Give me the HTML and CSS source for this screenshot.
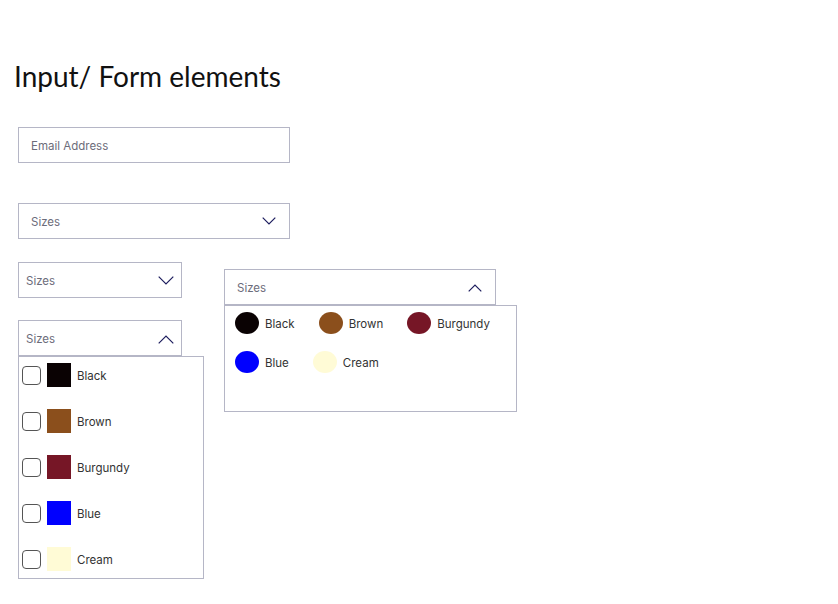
FILE: index.html
```html
<!DOCTYPE html>
<html lang="en">
<head>
<meta charset="utf-8">
<title>Input/ Form elements</title>
<link rel="stylesheet" href="styles.css">
</head>
<body>
<h1 class="title">Input/ Form elements</h1>
<div class="form">
  <div class="field field-wide"><span class="placeholder">Email Address</span></div>

  <div class="select select-wide">
    <span class="placeholder">Sizes</span>
    <svg class="chev" width="14" height="8" viewBox="0 0 14 8"><polyline points="0.7,0.7 7,7 13.3,0.7"/></svg>
  </div>

  <div class="row">
    <div class="col-left">
      <div class="select select-small">
        <span class="placeholder">Sizes</span>
        <svg class="chev chev-lg" width="16" height="9" viewBox="0 0 16 9"><polyline points="0.7,0.7 8,8 15.3,0.7"/></svg>
      </div>

      <div class="dropdown">
        <div class="select select-small select-open">
          <span class="placeholder">Sizes</span>
          <svg class="chev chev-lg" width="16" height="9" viewBox="0 0 16 9"><polyline points="0.7,8.3 8,1 15.3,8.3"/></svg>
        </div>
        <ul class="panel panel-list">
          <li class="opt"><span class="check"></span><span class="swatch c-black"></span><span class="label">Black</span></li>
          <li class="opt"><span class="check"></span><span class="swatch c-brown"></span><span class="label">Brown</span></li>
          <li class="opt"><span class="check"></span><span class="swatch c-burgundy"></span><span class="label">Burgundy</span></li>
          <li class="opt"><span class="check"></span><span class="swatch c-blue"></span><span class="label">Blue</span></li>
          <li class="opt"><span class="check"></span><span class="swatch c-cream"></span><span class="label">Cream</span></li>
        </ul>
      </div>
    </div>

    <div class="col-right">
      <div class="select select-wide select-open">
        <span class="placeholder">Sizes</span>
        <svg class="chev" width="14" height="8" viewBox="0 0 14 8"><polyline points="0.7,7.3 7,1 13.3,7.3"/></svg>
      </div>
      <ul class="panel panel-dots">
        <li class="dot-opt"><span class="dot c-black"></span><span class="label">Black</span></li>
        <li class="dot-opt"><span class="dot c-brown"></span><span class="label">Brown</span></li>
        <li class="dot-opt"><span class="dot c-burgundy"></span><span class="label">Burgundy</span></li>
        <li class="dot-opt"><span class="dot c-blue"></span><span class="label">Blue</span></li>
        <li class="dot-opt"><span class="dot c-cream"></span><span class="label">Cream</span></li>
      </ul>
    </div>
  </div>
</div>
</body>
</html>
```

FILE: styles.css
```css
* { box-sizing: border-box; }

body {
  margin: 0;
  background: #ffffff;
  font-family: Inter, "Noto Sans", sans-serif;
  color: #333333;
}

.title {
  margin: 0;
  padding: 60px 0 0 14px;
  font-family: Lato, "Open Sans", sans-serif;
  font-weight: 400;
  font-size: 28px;
  line-height: 33px;
  color: #111111;
}

.form {
  padding: 34px 0 0 18px;
  display: flex;
  flex-direction: column;
  align-items: flex-start;
}

.placeholder {
  font-size: 11.5px;
  color: #6c6c7a;
  padding-top: 2px;
}

.field,
.select {
  height: 36px;
  border: 1px solid #b5b6c6;
  background: #ffffff;
  display: flex;
  align-items: center;
}

.field-wide {
  width: 272px;
  padding-left: 12px;
}

.select {
  justify-content: space-between;
}

.select-wide {
  width: 272px;
  padding: 0 13px 0 12px;
  margin-top: 40px;
}

.select-small {
  width: 164px;
  padding: 0 7px 0 7px;
}

.chev {
  display: block;
  fill: none;
  stroke: #1d1d5e;
  stroke-width: 1.2;
}

.row {
  display: flex;
  align-items: flex-start;
  margin-top: 23px;
}

.col-left {
  display: flex;
  flex-direction: column;
  width: 186px;
}

.dropdown {
  margin-top: 22px;
}

.select-open.select-small .chev { margin-top: 2px; }

.panel {
  list-style: none;
  margin: 0;
  background: #ffffff;
  border: 1px solid #b5b6c6;
}

.panel-list {
  width: 186px;
  height: 223px;
  padding: 6px 3px 0 3px;
  display: flex;
  flex-direction: column;
  gap: 22px;
}

.opt {
  display: flex;
  align-items: center;
  height: 24px;
}

.check {
  width: 19px;
  height: 19px;
  border: 1px solid #555555;
  border-radius: 4px;
  margin-right: 6px;
}

.swatch {
  width: 24px;
  height: 24px;
  margin-right: 6px;
}

.label {
  font-size: 11.5px;
  color: #333333;
  padding-top: 1px;
}

.c-black { background: #0a0203; }
.c-brown { background: #8b4f1c; }
.c-burgundy { background: #761626; }
.c-blue { background: #0000ff; }
.c-cream { background: #fffbd6; }

.col-right {
  margin-left: 20px;
  margin-top: 7px;
  display: flex;
  flex-direction: column;
}

.col-right .select-wide {
  margin-top: 0;
}

.col-right .chev { margin-top: 2px; }

.panel-dots {
  width: 293px;
  height: 107px;
  padding: 6px 10px 0 10px;
  display: flex;
  flex-wrap: wrap;
  align-content: flex-start;
  column-gap: 24px;
  row-gap: 17px;
}

.dot-opt {
  display: flex;
  align-items: center;
  height: 22px;
}

.dot {
  width: 24px;
  height: 22px;
  border-radius: 50%;
  margin-right: 6px;
}
```
